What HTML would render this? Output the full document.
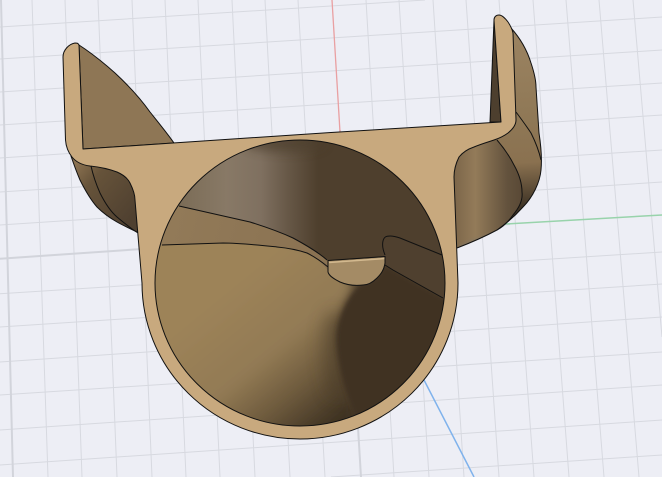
<!DOCTYPE html>
<html>
<head>
<meta charset="utf-8">
<title>Reference</title>
<style>
html,body{margin:0;padding:0;background:#edeef5;width:662px;height:477px;overflow:hidden}
svg{display:block}
</style>
</head>
<body>
<svg width="662" height="477" viewBox="0 0 662 477" xmlns="http://www.w3.org/2000/svg">
<defs>
<filter id="b2" filterUnits="userSpaceOnUse" x="100" y="100" width="500" height="377"><feGaussianBlur stdDeviation="2"/></filter>
<filter id="b5" filterUnits="userSpaceOnUse" x="100" y="100" width="500" height="377"><feGaussianBlur stdDeviation="5"/></filter>
<filter id="b8" filterUnits="userSpaceOnUse" x="100" y="100" width="500" height="377"><feGaussianBlur stdDeviation="8"/></filter>
<clipPath id="hole"><ellipse cx="300" cy="283" rx="145" ry="143"/></clipPath>
<clipPath id="rfl"><path d="M511,28 C520,38 527,50 531,63 C534,72 536,80 536,87 L539,133 C541,146 542,160 541,170 C540,182 533,197 523,207 C515,216 507,223 497,230 C484,237 470,243 457,248 L440,170 L516,110 Z"/></clipPath>
<linearGradient id="topband" gradientUnits="userSpaceOnUse" x1="175" y1="0" x2="318" y2="0">
<stop offset="0" stop-color="#7a6b55"/><stop offset=".36" stop-color="#887966"/><stop offset=".6" stop-color="#7f7060"/><stop offset=".78" stop-color="#685948"/><stop offset="1" stop-color="#4e3f2d"/>
</linearGradient>
<linearGradient id="low" gradientUnits="userSpaceOnUse" x1="225" y1="290" x2="335" y2="425">
<stop offset="0" stop-color="#9d8359"/><stop offset=".45" stop-color="#927a54"/><stop offset=".72" stop-color="#6c593c"/><stop offset="1" stop-color="#3c3021"/>
</linearGradient>
<linearGradient id="mid" gradientUnits="userSpaceOnUse" x1="170" y1="215" x2="320" y2="255">
<stop offset="0" stop-color="#927a58"/><stop offset="1" stop-color="#8a7252"/>
</linearGradient>
<linearGradient id="lf" gradientUnits="userSpaceOnUse" x1="75" y1="165" x2="135" y2="215">
<stop offset="0" stop-color="#8a7150"/><stop offset=".3" stop-color="#66533a"/><stop offset="1" stop-color="#4f4030"/>
</linearGradient>
<linearGradient id="rf" gradientUnits="userSpaceOnUse" x1="455" y1="190" x2="530" y2="190">
<stop offset="0" stop-color="#7d674a"/><stop offset=".27" stop-color="#937b59"/><stop offset=".7" stop-color="#63523d"/><stop offset="1" stop-color="#544432"/>
</linearGradient>
<linearGradient id="rfo" gradientUnits="userSpaceOnUse" x1="520" y1="40" x2="530" y2="215">
<stop offset="0" stop-color="#9a8260"/><stop offset=".45" stop-color="#8f7856"/><stop offset=".7" stop-color="#8a7150"/><stop offset=".95" stop-color="#3f3426"/>
</linearGradient>
</defs>

<rect width="662" height="477" fill="#edeef5"/>

<!-- grid -->
<g stroke="#d7d9e0" stroke-width="1" fill="none">
<path d="M0,27L425,0M0,59L662,17M0,92L662,50M0,125L662,83M0,158L662,115M0,192L662,150M0,225L662,182M0,293.7L662,252M0,327L662,284M0,362L662,317M0,395L662,352M0,430L662,385M0,465L662,420M331,477L662,455"/>
<path d="M32,0L48,477M65,0L82,477M98,0L117,477M132,0L152,477M165,0L186,477M198,0L220,477M232,0L255,477M265,0L290,477M298,0L325,477M366,0L394,477M399,0L429,477M433,0L464,477M466,0L499,477M499,0L534,477M533,0L569,477M566,0L604,477M599,0L639,477M633,0L662,337"/>
</g>
<g stroke="#d2d4db" stroke-width="2" fill="none">
<path d="M1,0L13,477"/>
<path d="M0,258.7L510,224"/>
<path d="M340,130L361,477"/>
</g>
<path d="M332,0L340,132" stroke="#e9a0a2" stroke-width="1.3" fill="none"/>
<path d="M505,224L662,215" stroke="#98d3ab" stroke-width="1.5" fill="none"/>
<path d="M424,380L474,477" stroke="#7fb2ec" stroke-width="1.5" fill="none"/>

<!-- left ear wedge -->
<path d="M79,45 L85,49 C95,56 105,64 115,73 C128,85 140,98 150,112 C158,122 167,133 174,143 L83,149 Z" fill="#8e7655" stroke="#111" stroke-width="1"/>

<!-- left flange -->
<path d="M71,156 C74,165 77,173 80,180 C85,190 90,199 97,207 C103,213 110,218 117,222 C124,226 131,229 139,233 L145,170 L90,150 Z" fill="url(#lf)" stroke="#111" stroke-width="1"/>
<path d="M91,166 C93,175 96,184 100,193 C105,203 110,211 117,217 C123,222 130,228 138,233" fill="none" stroke="#111" stroke-width="1"/>

<!-- right flange -->
<path d="M511,28 C520,38 527,50 531,63 C534,72 536,80 536,87 L539,133 C541,146 542,160 541,170 C540,182 533,197 523,207 C515,216 507,223 497,230 C484,237 470,243 457,248 L440,170 L516,110 Z" fill="url(#rfo)"/>
<g clip-path="url(#rfl)">
<path d="M490,130 L497,140 C503,147 510,157 514,165 C519,174 522,183 522,192 C523,200 519,208 513,215 C508,222 503,227 497,230 L457,250 L440,170 Z" fill="url(#rf)"/>
<ellipse cx="472" cy="248" rx="24" ry="6" transform="rotate(-24 472 248)" fill="#7a7367" filter="url(#b2)"/>
</g>
<path d="M511,28 C520,38 527,50 531,63 C534,72 536,80 536,87 L539,133 C541,146 542,160 541,170 C540,182 533,197 523,207 C515,216 507,223 497,230 C484,237 470,243 457,248" fill="none" stroke="#111" stroke-width="1"/>
<path d="M516,112 C522,120 527,127 531,133 C535,141 539,151 541,160" fill="none" stroke="#111" stroke-width="1"/>
<path d="M497,140 C503,147 510,157 514,165 C519,174 522,183 522,192 C523,200 519,208 513,215 C508,222 503,227 497,230" fill="none" stroke="#111" stroke-width="1"/>

<!-- right tab inner -->
<path d="M494,20 L490,122 L501,122 Z" fill="#4d3f2e" stroke="#111" stroke-width="1"/>

<!-- main tan body -->
<path d="M75,43 C69,44 63,50 63,57 L65.500,140 C66,147 68,152 72,157 C76,162 82,165 90,166 C100,167 109,169 117,172 C124,175 128,179 130,183 C133,189 135,194 135,200 L142,283 A158,156 0 0 0 458,283 L454,177 C454,169 456,163 459,157 C463,152 468,149 474,147 C481,144 488,142 494,140 C500,138 504,136 508,133 C513,129 516,125 516,120 L513,33 C512,28 510,25 508,22 C505,18 502,15 499,15 C496,15 494,17 494,20 L501,122 L331,132.500 L173,143 L83,149 L79,45 C78,43 77,43 75,43 Z" fill="#c8a97e" stroke="#111" stroke-width="1" stroke-linejoin="round"/>

<!-- hole interior -->
<g clip-path="url(#hole)">
<rect x="150" y="130" width="300" height="310" fill="#4e3f2d"/>
<!-- lower-left soft body -->
<path d="M140,200 L330,250 L354,286 C347,298 339,312 336,328 C334,345 337,368 346,392 C351,406 357,418 361,440 L140,445 Z" fill="url(#low)" filter="url(#b5)"/>
<path d="M338,315 C329,335 331,365 341,395" fill="none" stroke="#4a3b28" stroke-width="20" opacity=".5" filter="url(#b8)"/>
<!-- dark cover above notch -->
<path d="M300,130 L450,130 L450,252 L385,256 L328,261 L318,252 L300,240 Z" fill="#4e3f2d"/>
<!-- top band -->
<path d="M150,130 L318,130 L318,252 L328,261 C318,252 306,245 293,238 C280,232 266,227 250,222 C228,217 205,212 179,206 L150,200 Z" fill="url(#topband)"/>
<ellipse cx="285" cy="143" rx="40" ry="9" fill="#4e3f2d" opacity=".7" filter="url(#b5)"/>
<!-- mid band -->
<path d="M150,200 L179,206 C205,212 228,217 250,222 C266,227 280,232 293,238 C306,245 318,252 327,260 L329,272 C322,262 315,257 307,253 C298,250 288,248 277,247 C258,245 240,243 223,243 L150,246 Z" fill="url(#mid)"/>
<!-- right lobes -->
<path d="M385,265 L393,270 L443,298 L450,300 L450,430 L362,430 C352,410 340,380 337,345 C335,325 345,300 360,285 L377,278 Z" fill="#3f3224" filter="url(#b2)"/>
<path d="M380,262 L393,270 L443,298 L450,300 L450,240 L383,240 Z" fill="#4f402f"/>
<!-- notch -->
<path d="M328,261 L385,257 L385,263 C383,270 381,274 377,278 C373,282 368,285 363,285 C355,286 347,285 340,282 C334,279 329,276 328,272 Z" fill="#a48b65"/>
<path d="M329,262.500 L385,258.500" stroke="#d3b98f" stroke-width="1.500" fill="none"/>
<!-- edge lines -->
<g fill="none" stroke="#111" stroke-width="1">
<path d="M179,206 C205,212 228,217 250,222 C266,227 280,232 293,238 C306,245 318,252 327,260"/>
<path d="M162,245 L223,243 C240,243 258,245 277,247 C288,248 298,250 307,253 C315,257 322,262 328,267"/>
<path d="M328,260.500 L385,256.500"/>
<path d="M328,260 L328,272 C329,276 334,279 340,282 C347,285 355,286 363,285 C368,285 373,282 377,278 C381,274 384,270 385,263 L385,256"/>
<path d="M385,255 C383,250 382,245 383,241 C384,237 386,236 390,236 C394,236 397,237 400,238 L442,255"/>
<path d="M385,265 L393,270 L443,298"/>
</g>
</g>
<ellipse cx="300" cy="283" rx="145" ry="143" fill="none" stroke="#111" stroke-width="1"/>
</svg>
</body>
</html>
